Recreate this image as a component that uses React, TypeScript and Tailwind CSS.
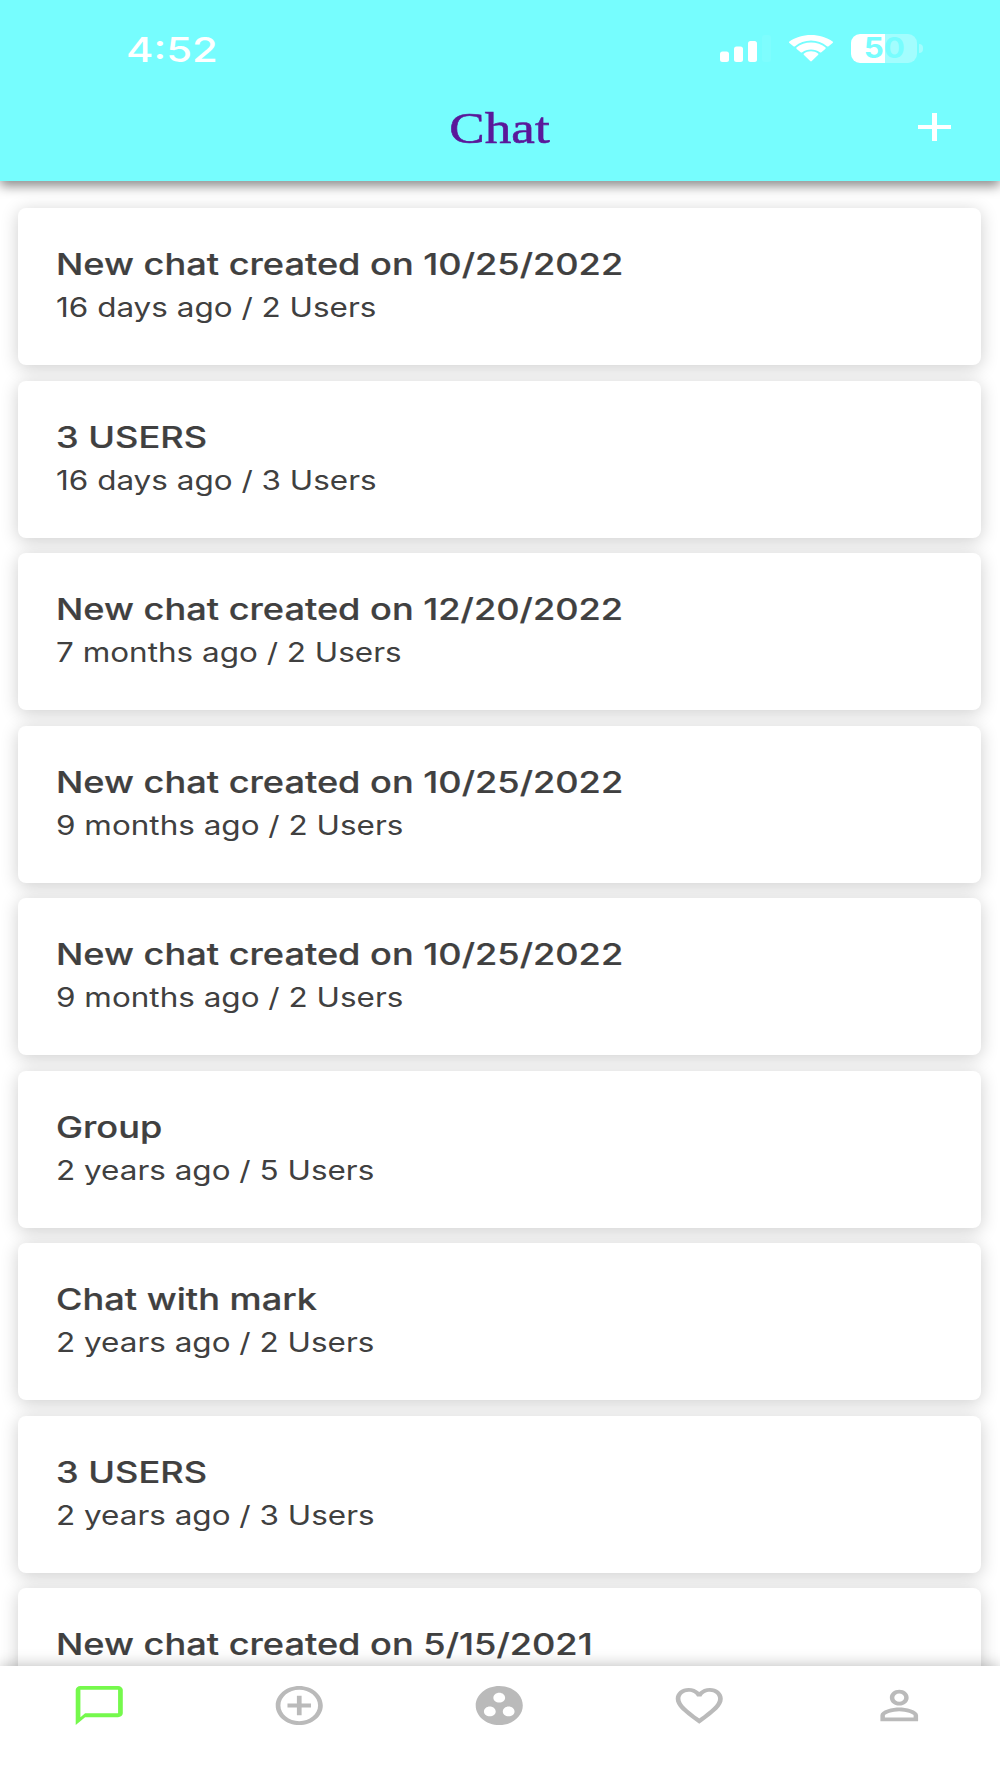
import { useState } from "react";

const chats = [
  { title: "New chat created on 10/25/2022", info: "16 days ago / 2 Users" },
  { title: "3 USERS", info: "16 days ago / 3 Users" },
  { title: "New chat created on 12/20/2022", info: "7 months ago / 2 Users" },
  { title: "New chat created on 10/25/2022", info: "9 months ago / 2 Users" },
  { title: "New chat created on 10/25/2022", info: "9 months ago / 2 Users" },
  { title: "Group", info: "2 years ago / 5 Users" },
  { title: "Chat with mark", info: "2 years ago / 2 Users" },
  { title: "3 USERS", info: "2 years ago / 3 Users" },
  { title: "New chat created on 5/15/2021" },
];

const tabs = [
  {
    name: "chat",
    path: "M20 2H4c-1.1 0-2 .9-2 2v18l4-4h14c1.1 0 2-.9 2-2V4c0-1.1-.9-2-2-2zm0 14H6l-2 2V4h16v12z",
  },
  {
    name: "add",
    path: "M13 7h-2v4H7v2h4v4h2v-4h4v-2h-4V7zm-1-5C6.48 2 2 6.48 2 12s4.48 10 10 10 10-4.48 10-10S17.52 2 12 2zm0 18c-4.41 0-8-3.59-8-8s3.59-8 8-8 8 3.59 8 8-3.59 8-8 8z",
  },
  {
    name: "groups",
    path: "M12 2C6.48 2 2 6.48 2 12s4.48 10 10 10 10-4.48 10-10S17.52 2 12 2zM8 17.5c-1.38 0-2.5-1.12-2.5-2.5s1.12-2.5 2.5-2.5 2.5 1.12 2.5 2.5-1.12 2.5-2.5 2.5zM9.5 8c0-1.38 1.12-2.5 2.5-2.5s2.5 1.12 2.5 2.5-1.12 2.5-2.5 2.5S9.5 9.38 9.5 8zm6.5 9.5c-1.38 0-2.5-1.12-2.5-2.5s1.12-2.5 2.5-2.5 2.5 1.12 2.5 2.5-1.12 2.5-2.5 2.5z",
  },
  {
    name: "likes",
    path: "M16.5 3c-1.74 0-3.41.81-4.5 2.09C10.91 3.81 9.24 3 7.5 3 4.42 3 2 5.42 2 8.5c0 3.78 3.4 6.86 8.55 11.54L12 21.35l1.45-1.32C18.6 15.36 22 12.28 22 8.5 22 5.42 19.58 3 16.5 3zm-4.4 15.55l-.1.1-.1-.1C7.14 14.24 4 11.39 4 8.5 4 6.5 5.5 5 7.5 5c1.54 0 3.04.99 3.57 2.36h1.87C13.46 5.99 14.96 5 16.5 5c2 0 3.5 1.5 3.5 3.5 0 2.89-3.14 5.74-7.9 10.05z",
  },
  {
    name: "profile",
    path: "M12 5.9a2.1 2.1 0 1 1 0 4.2 2.1 2.1 0 0 1 0-4.2m0 9c2.97 0 6.1 1.46 6.1 2.1v1.1H5.9V17c0-.64 3.13-2.1 6.1-2.1M12 4C9.79 4 8 5.79 8 8s1.79 4 4 4 4-1.79 4-4-1.79-4-4-4zm0 9c-2.67 0-8 1.34-8 4v3h16v-3c0-2.66-5.33-4-8-4z",
  },
];

const StatusBar = () => {
  return (
    <div className="flex h-[97px] items-center justify-between pl-[126px] pr-[77px] text-white">
      <p className="origin-left scale-x-[1.23] pt-[3px] text-[34px] leading-none font-medium">4:52</p>
      <div className="flex items-center">
        <svg width="52" height="30" viewBox="0 0 52 30" fill="currentColor">
          <rect x="0" y="17.5" width="9" height="10.5" rx="2.5" />
          <rect x="14" y="12.5" width="9" height="15.5" rx="2.5" />
          <rect x="28" y="7" width="9" height="21" rx="2.5" />
          <rect x="42" y="1" width="9" height="27" rx="2.5" opacity="0.06" />
        </svg>
        <svg className="ml-[17px]" width="44" height="28" viewBox="0 0 44 28" fill="currentColor">
          <path d="M22 5.6c6 0 11.6 2.1 15.9 5.7.5.4 1.2.4 1.7 0l4-3.3c.5-.4.5-1.1 0-1.5C37.8 2.400 30.2 0 22 0S6.2 2.4.4 6.5c-.5.4-.5 1.1 0 1.5l4 3.3c.5.4 1.2.4 1.7 0C10.400 7.700 16 5.600 22 5.600z" />
          <path d="M22 14.4c3.3 0 6.3 1 8.7 2.8.5.4 1.2.4 1.7 0l3.9-3.3c.5-.4.5-1.1 0-1.6-3.8-3-8.8-4.7-14.3-4.7S11.5 9.3 7.7 12.3c-.5.5-.5 1.2 0 1.6l3.9 3.3c.5.4 1.2.4 1.7 0 2.4-1.8 5.4-2.8 8.7-2.8z" />
          <path d="M29 19.9c.5-.4.5-1.1 0-1.5-1.9-1.4-4.3-2.2-7-2.2s-5.1.8-7 2.2c-.5.4-.5 1.1 0 1.5l6.2 6.2c.5.4 1.1.4 1.6 0z" />
        </svg>
        <div className="ml-[18px] flex h-[29px] w-[66px] items-center justify-center rounded-[9px] bg-[linear-gradient(to_right,white_51%,#a3fdfe_51%)]">
          <p className="scale-x-[1.12] text-[28px] leading-[29px] font-bold text-[#78fdfe]">50</p>
        </div>
        <div className="ml-[2px] h-[9px] w-[4px] rounded-r-full bg-[#a3fdfe]" />
      </div>
    </div>
  );
};

const Header = () => {
  return (
    <header className="relative z-10 h-[181px] shrink-0 bg-[#76fdfe] shadow-[0_5px_11px_rgba(0,0,0,0.46)]">
      <StatusBar />
      <div className="grid grid-cols-[1fr_auto_1fr] items-center pr-[49px]">
        <div />
        <h1 className="ml-[48px] scale-x-[1.18] pt-px font-['Liberation_Serif',serif] text-[45px] leading-[60px] text-[#5a189a] [-webkit-text-stroke:0.6px_#5a189a]">
          Chat
        </h1>
        <button className="-mt-[2px] justify-self-end">
          <svg width="33" height="28" viewBox="0 0 33 28" fill="white">
            <path d="M14 0h5v12h14v4H19v12h-5V16H0v-4h14z" />
          </svg>
        </button>
      </div>
    </header>
  );
};

const ChatCard = ({ title, info }: { title: string; info?: string }) => {
  return (
    <div className="h-[157px] shrink-0 rounded-[8px] bg-white pt-[37px] pl-[38px] whitespace-nowrap text-[#404040] shadow-[0_3px_18px_rgba(0,0,0,0.2)]">
      <h2 className="w-max origin-left scale-x-[1.205] text-[30px] leading-[38px] font-medium [-webkit-text-stroke:0.2px_#404040]">
        {title}
      </h2>
      {info ? (
        <p className="mt-[6px] w-max origin-left scale-x-[1.187] text-[26.5px] leading-[36px]">{info}</p>
      ) : null}
    </div>
  );
};

const App = () => {
  const [active, setActive] = useState<string>("chat");

  return (
    <div className="flex h-[1778px] w-[1000px] flex-col overflow-hidden bg-white font-['Inter',sans-serif]">
      <Header />
      <main className="flex min-h-0 flex-1 flex-col gap-[15.5px] overflow-hidden pt-[27px] pr-[19px] pl-[18px]">
        {chats.map((chat, i) => (
          <ChatCard key={i} title={chat.title} info={chat.info} />
        ))}
      </main>
      <nav className="relative z-10 grid h-[112px] shrink-0 grid-cols-5 items-start bg-white pt-[16px] shadow-[0_-1px_14px_rgba(0,0,0,0.25)]">
        {tabs.map((tab) => (
          <button key={tab.name} className="flex justify-center pr-[1.5px]" onClick={() => setActive(tab.name)}>
            <svg
              className={active === tab.name ? "text-[#75f94c]" : "text-[#bababa]"}
              width="56.5"
              height="47"
              viewBox="0 0 24 24"
              preserveAspectRatio="none"
              fill="currentColor"
            >
              <path d={tab.path} />
            </svg>
          </button>
        ))}
      </nav>
    </div>
  );
};

export default App;
